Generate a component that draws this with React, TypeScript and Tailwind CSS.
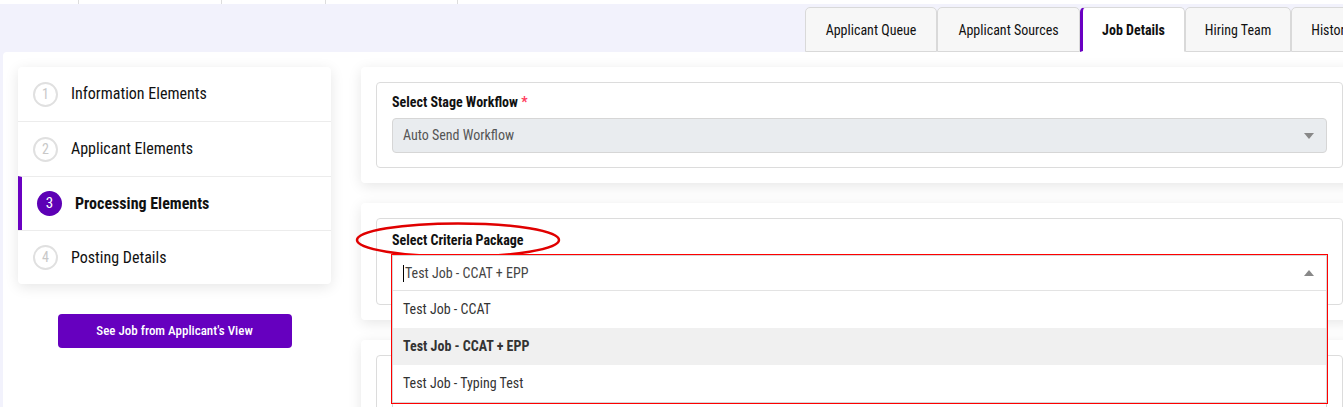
const steps = [
  { n: 1, label: 'Information Elements', h: 'h-[54px]' },
  { n: 2, label: 'Applicant Elements', h: 'h-[55px]' },
  { n: 3, label: 'Processing Elements', h: 'h-[54px]', active: true },
  { n: 4, label: 'Posting Details', h: 'h-[54px]' },
];

const tabs = [
  { label: 'Applicant Queue', w: 'w-[132px]' },
  { label: 'Applicant Sources', w: 'w-[143px]' },
  { label: 'Job Details', w: 'w-[105px]', active: true },
  { label: 'Hiring Team', w: 'w-[106px]' },
  { label: 'History', w: 'w-[80px]' },
];

function Caret({ up }: { up?: boolean }) {
  return (
    <svg width="10" height="6" viewBox="0 0 10 6" className="text-[#888]">
      <path d={up ? 'M0 6 L5 0 L10 6 Z' : 'M0 0 L10 0 L5 6 Z'} fill="currentColor" />
    </svg>
  );
}

export default function App() {
  return (
    <div className="h-[407px] w-full overflow-hidden bg-[#f2f2fc] font-['Roboto',sans-serif] font-stretch-semi-condensed text-[#111]">
      {/* top strip */}
      <div className="flex h-[4px] bg-white">
        <div className="w-[79px] border-r border-[#ddd]" />
        <div className="w-[143px] border-r border-[#ddd]" />
        <div className="w-[104px] border-r border-[#ddd]" />
        <div className="w-[132px] border-r border-[#ddd]" />
      </div>

      {/* tabs */}
      <div className="flex h-[48px] items-end justify-start pl-[805px]">
        {tabs.map((t) => (
          <div
            key={t.label}
            className={`flex h-[45px] shrink-0 items-center justify-center rounded-t-[5px] border pt-[2px] text-[14px] ${t.w} ${
              t.active
                ? 'border-[#d9d9d9] border-b-white border-l-[3px] border-l-[#6a00c2] bg-white font-bold'
                : 'border-[#d9d9d9] bg-[#f7f7f7]'
            }`}
          >
            {t.label}
          </div>
        ))}
      </div>

      {/* main */}
      <div className="ml-[3px] flex h-[355px] gap-[30px] overflow-hidden rounded-tl-[4px] bg-white pl-[15px] pt-[15px]">
        {/* sidebar */}
        <div className="w-[313px] shrink-0">
          <div className="overflow-hidden rounded-[4px] bg-white shadow-[0_3px_14px_rgba(0,0,0,0.1)]">
            {steps.map((s, i) => (
              <div
                key={s.n}
                className={`flex ${s.h} items-center ${i > 0 ? 'border-t border-[#ececec]' : ''} ${
                  s.active ? 'border-l-[4px] border-l-[#6a00c2] pl-[15px]' : 'pl-[15px]'
                }`}
              >
                {s.active ? (
                  <div className="flex h-[25px] w-[25px] items-center justify-center rounded-full bg-[#5d00b5] text-[15px] text-white">
                    {s.n}
                  </div>
                ) : (
                  <div className="flex h-[25px] w-[25px] items-center justify-center rounded-full border-2 border-[#e0e0e0] text-[14px] text-[#c8c8c8]">
                    {s.n}
                  </div>
                )}
                <span className={`ml-[13px] text-[16px] ${s.active ? 'font-bold' : ''}`}>{s.label}</span>
              </div>
            ))}
          </div>
          <div className="mt-[30px] flex justify-center">
            <button
              type="button"
              className="h-[34px] w-[234px] rounded-[4px] bg-[#6600bf] text-[13px] font-medium text-white"
            >
              See Job from Applicant's View
            </button>
          </div>
        </div>

        {/* right column */}
        <div className="flex w-[997px] shrink-0 flex-col gap-[20px]">
          {/* stage workflow */}
          <div className="rounded-[4px] bg-white p-[15px] shadow-[0_3px_14px_rgba(0,0,0,0.1)]">
            <div className="rounded-[4px] border border-[#dcdcdc] px-[15px] pb-[14px] pt-[11px]">
              <div className="mb-[8px] text-[14px] font-bold leading-[16px]">
                Select Stage Workflow <span className="text-[#ff3b5c]">*</span>
              </div>
              <div className="flex h-[35px] items-center justify-between rounded-[4px] border border-[#d6d6d6] bg-[#e9ecef] pl-[10px] pr-[12px] text-[14px] text-[#555]">
                <span>Auto Send Workflow</span>
                <Caret />
              </div>
            </div>
          </div>

          {/* criteria package */}
          <div className="relative rounded-[4px] bg-white p-[15px] shadow-[0_3px_14px_rgba(0,0,0,0.1)]">
            <div className="rounded-[4px] border border-[#dcdcdc] px-[15px] pb-[13px] pt-[13px]">
              <div className="relative mb-[7px] text-[14px] font-bold leading-[16px]">
                Select Criteria Package
                <svg
                  className="absolute left-[-37px] top-[-11px]"
                  width="206"
                  height="38"
                  viewBox="0 0 206 38"
                  fill="none"
                >
                  <ellipse cx="103" cy="19" rx="101" ry="16.5" stroke="#e00000" strokeWidth="2.5" />
                </svg>
              </div>
              <div className="relative h-[36px]">
                <div className="absolute left-0 right-0 top-0 z-10 border border-[#d6d6d6] bg-white outline outline-[1.5px] outline-[#ff0000]">
                  <div className="flex h-[35px] items-center justify-between border-b border-[#e3e3e3] pl-[10px] pr-[12px] text-[14px] text-[#444]">
                    <span className="flex items-center">
                      <span className="mr-[1px] inline-block h-[17px] w-px bg-black" />
                      Test Job - CCAT + EPP
                    </span>
                    <Caret up />
                  </div>
                  <div className="flex h-[37px] items-center pl-[10px] text-[14px] text-[#333]">Test Job - CCAT</div>
                  <div className="flex h-[37px] items-center bg-[#f0f0f0] pl-[10px] text-[14px] font-bold text-[#333]">
                    Test Job - CCAT + EPP
                  </div>
                  <div className="flex h-[37px] items-center pl-[10px] text-[14px] text-[#333]">
                    Test Job - Typing Test
                  </div>
                </div>
              </div>
            </div>
          </div>

          {/* next card */}
          <div className="rounded-[4px] bg-white p-[15px] shadow-[0_3px_14px_rgba(0,0,0,0.1)]">
            <div className="h-[90px] rounded-[4px] border border-[#dcdcdc] px-[15px] pt-[40px]">
              <div className="flex h-[36px] items-center rounded-[4px] border border-[#d6d6d6] pl-[10px] text-[14px] text-[#555]">
                New Ref Form
              </div>
            </div>
          </div>
        </div>
      </div>
    </div>
  );
}
